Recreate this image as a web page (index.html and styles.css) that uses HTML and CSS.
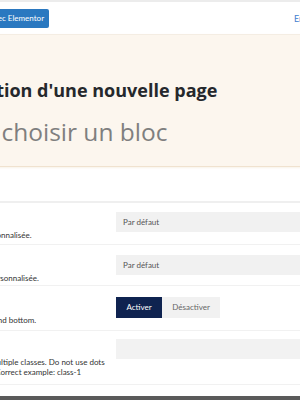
FILE: index.html
```html
<!DOCTYPE html>
<html lang="fr">
<head>
    <meta charset="UTF-8">
    <meta name="viewport" content="width=device-width, initial-scale=1.0">
    <title>Création d'une nouvelle page</title>
    <link rel="stylesheet" href="styles.css">
</head>
<body>

    <div class="sheet">

        <div class="topbar">
            <a class="btn-elementor" href="#">Modifier avec Elementor</a>
            <a class="topbar-link" href="#">Enregistrer le brouillon</a>
        </div>

        <div class="hero">
            <h1 class="hero-title">Création d'une nouvelle page</h1>
            <p class="hero-sub">Ou choisir un bloc</p>
        </div>

        <div class="section-gap"></div>

        <div class="settings">
            <div class="row">
                <div class="row-info">
                    <div class="row-label">Modèle de page</div>
                    <div class="row-desc">Choisissez une mise en page personnalisée.</div>
                </div>
                <div class="row-control">
                    <div class="select">Par défaut</div>
                </div>
            </div>

            <div class="row row-b">
                <div class="row-info">
                    <div class="row-label">Barre latérale</div>
                    <div class="row-desc">Choisissez votre barre latérale, personnalisée.</div>
                </div>
                <div class="row-control">
                    <div class="select">Par défaut</div>
                </div>
            </div>

            <div class="row row-c">
                <div class="row-info">
                    <div class="row-label">Marges</div>
                    <div class="row-desc">Remove the page spacing at top and bottom.</div>
                </div>
                <div class="row-control">
                    <div class="toggle">
                        <span class="toggle-on">Activer</span>
                        <span class="toggle-off">Désactiver</span>
                    </div>
                </div>
            </div>

            <div class="row row-tall">
                <div class="row-info">
                    <div class="row-label">Classes CSS</div>
                    <div class="row-desc">Use a space between names of multiple classes. Do not use dots<br>or prefix before the class names. Correct example: class-1</div>
                </div>
                <div class="row-control">
                    <div class="text-input"></div>
                </div>
            </div>
        </div>

        <div class="footer-bar"></div>

    </div>

</body>
</html>
```

FILE: styles.css
```css
* {
    box-sizing: border-box;
}

body {
    margin: 0;
    overflow: hidden;
    background: #fff;
    font-family: Lato, 'Open Sans', sans-serif;
    color: #333;
}

.sheet {
    width: 700px;
    margin-left: -120px;
}

/* top bar */
.topbar {
    height: 34px;
    border-top: 2px solid #ececec;
    display: flex;
    align-items: center;
    gap: 245px;
}

.btn-elementor {
    display: block;
    background: #2a78c0;
    color: #fff;
    font-size: 8px;
    line-height: 19px;
    padding: 0 5px 0 78px;
    border-radius: 2px;
    text-decoration: none;
    white-space: nowrap;
}

.topbar-link {
    color: #3f7fcf;
    font-size: 9px;
    text-decoration: none;
    white-space: nowrap;
}

/* hero */
.hero {
    height: 133px;
    background: #fcf6ee;
    border-top: 1px solid #f4ede3;
    border-bottom: 1px solid #f0e2cf;
    box-shadow: 0 1px 2px rgba(230, 210, 180, 0.3);
    padding-left: 75px;
    font-family: 'Open Sans', sans-serif;
}

.hero-title {
    margin: 0;
    padding-top: 43px;
    font-size: 18px;
    line-height: 24px;
    font-weight: 700;
    color: #25282c;
}

.hero-sub {
    margin: 0 0 0 6px;
    padding-top: 15px;
    font-size: 24.5px;
    line-height: 30px;
    color: #7f7f7f;
}

.section-gap {
    height: 34px;
}

/* settings rows */
.settings {
    border-top: 2px solid #efefef;
}

.row {
    display: grid;
    grid-template-columns: 226px 1fr;
    gap: 10px;
    height: 42px;
    padding-top: 9px;
    border-bottom: 1px solid #f1f1f1;
}

.row-b {
    height: 41px;
    padding-top: 10px;
}

.row-c {
    height: 45px;
    padding-top: 11px;
}

.row-tall {
    height: 54px;
    padding-top: 8px;
}

.row-info {
    font-size: 8px;
    line-height: 10px;
    white-space: nowrap;
}

.row-label {
    font-weight: 700;
    height: 18px;
}

.row-desc {
    color: #333;
}

.select {
    height: 20px;
    line-height: 20px;
    background: #f1f1f1;
    padding-left: 7px;
    font-size: 8px;
    color: #555;
}

.toggle {
    display: flex;
    font-size: 8px;
    line-height: 21px;
}

.toggle-on {
    background: #0f2350;
    color: #fff;
    width: 46px;
    text-align: center;
}

.toggle-off {
    background: #f1f1f1;
    color: #666;
    width: 58px;
    text-align: center;
}

.text-input {
    height: 20px;
    background: #f2f2f2;
}

.footer-bar {
    margin-top: 11px;
    height: 4px;
    background: #5a5a5a;
}
```
